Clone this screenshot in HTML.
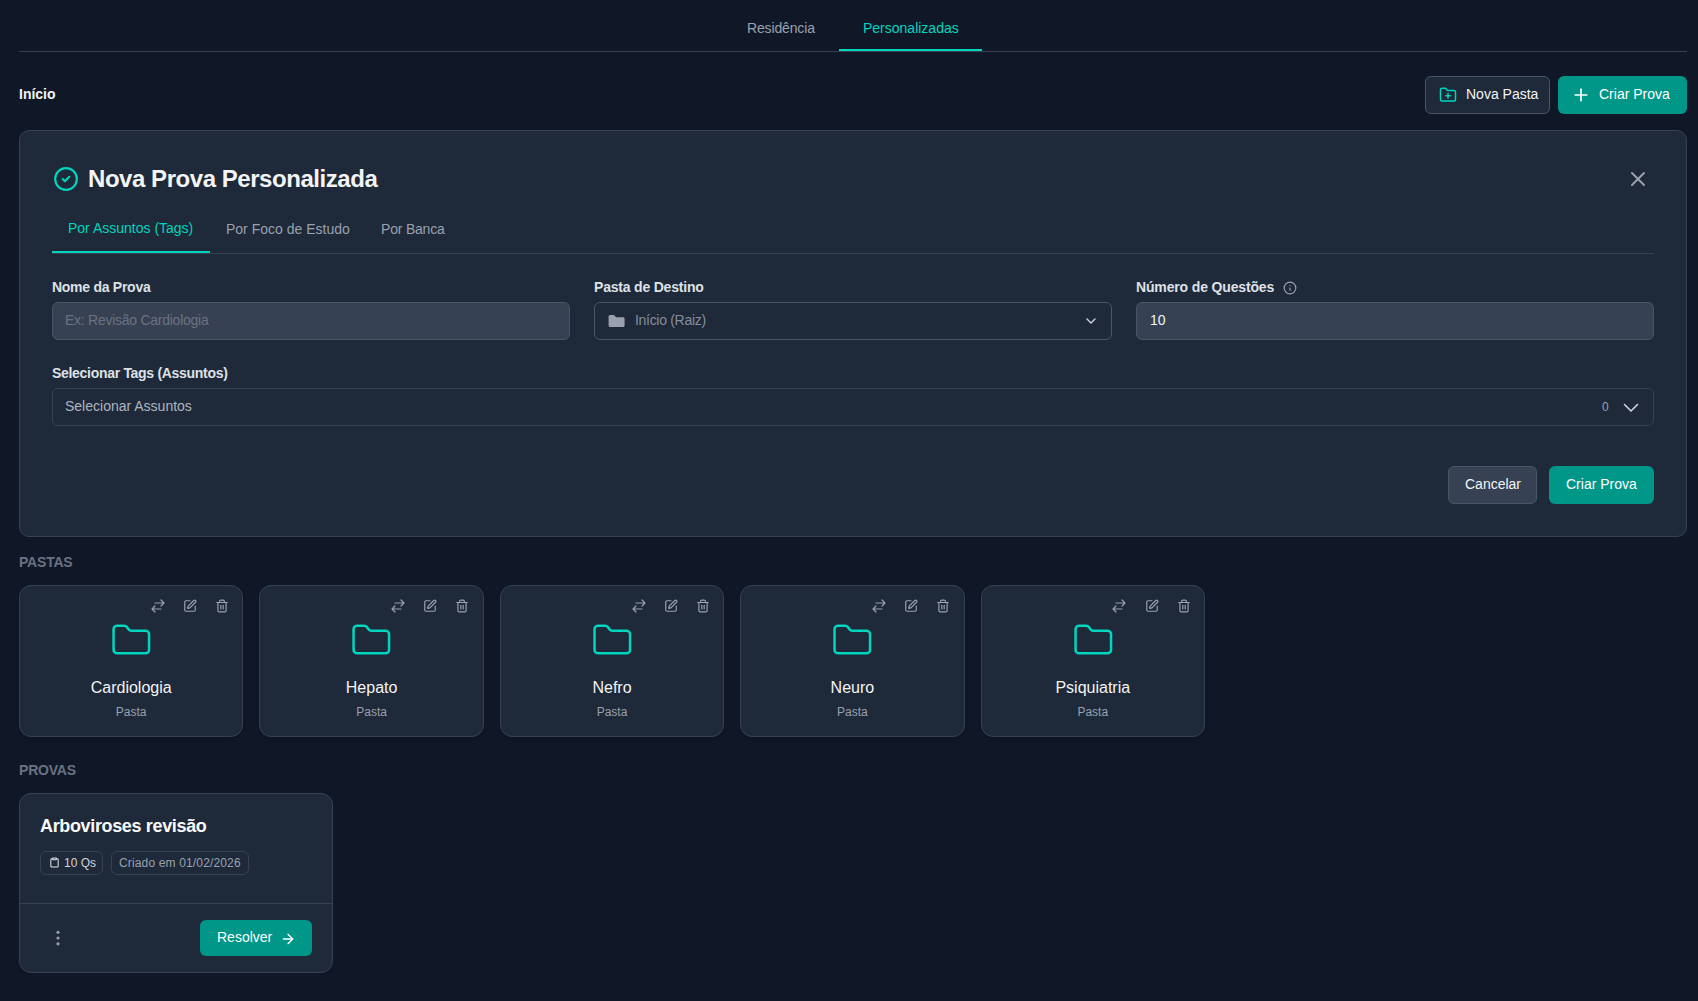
<!DOCTYPE html>
<html><head><meta charset="utf-8">
<style>
*{box-sizing:border-box;margin:0;padding:0}
html,body{width:1698px;height:1001px;overflow:hidden;background:#101828;font-family:"Liberation Sans",sans-serif;color:#e5e7eb}
.t{position:absolute;white-space:nowrap;line-height:1}
svg{position:absolute;fill:none;stroke:currentColor;stroke-linecap:round;stroke-linejoin:round}
.box{position:absolute}
.topline{position:absolute;left:19px;top:51px;width:1668px;height:1px;background:#364153}
.f14{font-size:14px}
.b{font-weight:bold}
.teal{color:#00d5be}
.gray{color:#99a1af}
.modal{position:absolute;left:19px;top:130px;width:1668px;height:407px;background:#1e2939;border:1px solid #364153;border-radius:10px}
.inp{position:absolute;top:302px;height:38px;border-radius:6px;border:1px solid #4a5565}
.card{box-shadow:0 1px 3px rgba(0,0,0,.1),0 1px 2px -1px rgba(0,0,0,.1);position:absolute;top:585px;width:224px;height:152px;background:#1e2939;border:1px solid #364153;border-radius:12px}
.card .ic{color:#99a1af}
</style></head>
<body>
<!-- top tabs -->
<div class="t f14 gray" style="left:747px;top:21px;letter-spacing:-0.15px">Residência</div>
<div class="t f14 teal" style="left:863px;top:21px">Personalizadas</div>
<div class="box" style="left:839px;top:49px;width:143px;height:2px;background:#00d5be"></div>
<div class="topline"></div>

<div class="t f14 b" style="left:19px;top:87px;color:#f3f4f6">Início</div>

<!-- header buttons -->
<div class="box" style="left:1425px;top:76px;width:125px;height:38px;background:#1e2939;border:1px solid #4a5565;border-radius:6px"></div>
<svg style="left:1439px;top:86px;color:#00d5be" width="18" height="18" viewBox="0 0 24 24" stroke-width="2"><path d="M12 10v6"/><path d="M9 13h6"/><path d="M20 20a2 2 0 0 0 2-2V8a2 2 0 0 0-2-2h-7.9a2 2 0 0 1-1.690-.9L9.6 3.9A2 2 0 0 0 7.93 3H4a2 2 0 0 0-2 2v13a2 2 0 0 0 2 2Z"/></svg>
<div class="t f14" style="left:1466px;top:87px;color:#f3f4f6">Nova Pasta</div>
<div class="box" style="left:1558px;top:76px;width:129px;height:38px;background:#009688;border-radius:6px"></div>
<svg style="left:1571px;top:85px;color:#fff" width="20" height="20" viewBox="0 0 24 24" stroke-width="2"><path d="M5 12h14"/><path d="M12 5v14"/></svg>
<div class="t f14" style="left:1599px;top:87px;color:#fff">Criar Prova</div>

<!-- modal -->
<div class="modal"></div>
<svg style="left:53px;top:166px;color:#00d5be" width="26" height="26" viewBox="0 0 24 24" stroke-width="2"><circle cx="12" cy="12" r="10"/><path d="m9 12 2 2 4-4"/></svg>
<div class="t b" style="left:88px;top:167px;font-size:24px;letter-spacing:-0.45px;color:#f3f4f6">Nova Prova Personalizada</div>
<svg style="left:1626px;top:167px;color:#99a1af" width="24" height="24" viewBox="0 0 24 24" stroke-width="2"><path d="M18 6 6 18"/><path d="m6 6 12 12"/></svg>

<div class="t f14 teal" style="left:68px;top:221px">Por Assuntos (Tags)</div>
<div class="t f14 gray" style="left:226px;top:222px">Por Foco de Estudo</div>
<div class="t f14 gray" style="left:381px;top:222px;letter-spacing:-0.2px">Por Banca</div>
<div class="box" style="left:52px;top:253px;width:1602px;height:1px;background:#364153"></div>
<div class="box" style="left:52px;top:251px;width:158px;height:2px;background:#00d5be"></div>

<div class="t f14 b" style="left:52px;top:280px;color:#dde1e6;letter-spacing:-0.27px">Nome da Prova</div>
<div class="t f14 b" style="left:594px;top:280px;color:#dde1e6;letter-spacing:-0.2px">Pasta de Destino</div>
<div class="t f14 b" style="left:1136px;top:280px;color:#dde1e6;letter-spacing:-0.15px">Número de Questões</div>
<svg style="left:1283px;top:281px;color:#99a1af" width="14" height="14" viewBox="0 0 24 24" stroke-width="2"><circle cx="12" cy="12" r="10"/><path d="M12 16v-4"/><path d="M12 8h.01"/></svg>

<div class="inp" style="left:52px;width:518px;background:#364153"></div>
<div class="t f14" style="left:65px;top:313px;color:#6a7282;letter-spacing:-0.26px">Ex: Revisão Cardiologia</div>

<div class="inp" style="left:594px;width:518px;background:#1e2939"></div>
<svg style="left:607.4px;top:312.9px;color:#99a1af;fill:#99a1af;stroke:none" width="19.2" height="16.9" viewBox="0 0 24 24" preserveAspectRatio="none"><path d="M20 20a2 2 0 0 0 2-2V8a2 2 0 0 0-2-2h-7.9a2 2 0 0 1-1.69-.9L9.6 3.9A2 2 0 0 0 7.93 3H4a2 2 0 0 0-2 2v13a2 2 0 0 0 2 2Z"/></svg>
<div class="t f14" style="left:635px;top:313px;color:#858e9c;letter-spacing:-0.3px">Início (Raiz)</div>
<svg style="left:1083px;top:313px;color:#d1d5dc" width="16" height="16" viewBox="0 0 24 24" stroke-width="2"><path d="m6 9 6 6 6-6"/></svg>

<div class="inp" style="left:1136px;width:518px;background:#364153"></div>
<div class="t f14" style="left:1150px;top:313px;color:#f3f4f6">10</div>

<div class="t f14 b" style="left:52px;top:366px;color:#dde1e6;letter-spacing:-0.3px">Selecionar Tags (Assuntos)</div>
<div class="box" style="left:52px;top:388px;width:1602px;height:38px;border:1px solid #364153;border-radius:6px;background:#1e2939"></div>
<div class="t f14" style="left:65px;top:399px;color:#aeb5c0">Selecionar Assuntos</div>
<div class="t" style="left:1602px;top:401px;font-size:12px;color:#99a1af">0</div>
<svg style="left:1620px;top:397px;color:#d1d5dc" width="22" height="20" viewBox="0 0 22 20" stroke-width="1.6"><path d="M4.5 7.5 11 14 17.5 7.5"/></svg>

<div class="box" style="left:1448px;top:466px;width:89px;height:38px;background:#364153;border:1px solid #4a5565;border-radius:6px"></div>
<div class="t f14" style="left:1465px;top:477px;color:#f3f4f6">Cancelar</div>
<div class="box" style="left:1549px;top:466px;width:105px;height:38px;background:#009688;border-radius:6px"></div>
<div class="t f14" style="left:1566px;top:477px;color:#fff">Criar Prova</div>

<!-- PASTAS -->
<div class="t f14 b" style="left:19px;top:555px;color:#6a7282;letter-spacing:-0.2px">PASTAS</div>
<div class="card" style="left:19px;width:224.4px"></div>
<svg style="left:149.7px;top:598.3px;color:#99a1af" width="16" height="16" viewBox="0 0 24 24" stroke-width="1.8"><path d="M7.5 21 3 16.5 7.5 12M3 16.5h13.5M16.5 3 21 7.5 16.5 12M21 7.5H7.5"/></svg>
<svg style="left:183.0px;top:599px;color:#99a1af" width="14" height="14" viewBox="0 0 24 24" stroke-width="2"><path d="M12 3H5a2 2 0 0 0-2 2v14a2 2 0 0 0 2 2h14a2 2 0 0 0 2-2v-7"/><path d="M18.375 2.625a1 1 0 0 1 3 3l-9.013 9.014a2 2 0 0 1-.853.505l-2.873.84a.5.5 0 0 1-.62-.62l.84-2.873a2 2 0 0 1 .506-.852z"/></svg>
<svg style="left:215.0px;top:599px;color:#99a1af" width="14" height="14" viewBox="0 0 24 24" stroke-width="2"><path d="M3 6h18"/><path d="M19 6v14c0 1-1 2-2 2H7c-1 0-2-1-2-2V6"/><path d="M8 6V4c0-1 1-2 2-2h4c1 0 2 1 2 2v2"/><line x1="10" x2="10" y1="11" y2="17"/><line x1="14" x2="14" y1="11" y2="17"/></svg>
<svg style="left:109.9px;top:621.4px;color:#00d5be" width="42.6" height="38.8" viewBox="0 0 24 24" preserveAspectRatio="none"><path d="M20 20a2 2 0 0 0 2-2V8a2 2 0 0 0-2-2h-7.9a2 2 0 0 1-1.69-.9L9.6 3.9A2 2 0 0 0 7.93 3H4a2 2 0 0 0-2 2v13a2 2 0 0 0 2 2Z" stroke-width="2.5" vector-effect="non-scaling-stroke"/></svg>
<div class="t" style="left:19px;width:224.4px;text-align:center;top:679.5px;font-size:16px;color:#f3f4f6">Cardiologia</div>
<div class="t" style="left:19px;width:224.4px;text-align:center;top:706px;font-size:12px;color:#99a1af">Pasta</div>
<div class="card" style="left:259.4px;width:224.4px"></div>
<svg style="left:390.1px;top:598.3px;color:#99a1af" width="16" height="16" viewBox="0 0 24 24" stroke-width="1.8"><path d="M7.5 21 3 16.5 7.5 12M3 16.5h13.5M16.5 3 21 7.5 16.5 12M21 7.5H7.5"/></svg>
<svg style="left:423.4px;top:599px;color:#99a1af" width="14" height="14" viewBox="0 0 24 24" stroke-width="2"><path d="M12 3H5a2 2 0 0 0-2 2v14a2 2 0 0 0 2 2h14a2 2 0 0 0 2-2v-7"/><path d="M18.375 2.625a1 1 0 0 1 3 3l-9.013 9.014a2 2 0 0 1-.853.505l-2.873.84a.5.5 0 0 1-.62-.62l.84-2.873a2 2 0 0 1 .506-.852z"/></svg>
<svg style="left:455.4px;top:599px;color:#99a1af" width="14" height="14" viewBox="0 0 24 24" stroke-width="2"><path d="M3 6h18"/><path d="M19 6v14c0 1-1 2-2 2H7c-1 0-2-1-2-2V6"/><path d="M8 6V4c0-1 1-2 2-2h4c1 0 2 1 2 2v2"/><line x1="10" x2="10" y1="11" y2="17"/><line x1="14" x2="14" y1="11" y2="17"/></svg>
<svg style="left:350.3px;top:621.4px;color:#00d5be" width="42.6" height="38.8" viewBox="0 0 24 24" preserveAspectRatio="none"><path d="M20 20a2 2 0 0 0 2-2V8a2 2 0 0 0-2-2h-7.9a2 2 0 0 1-1.69-.9L9.6 3.9A2 2 0 0 0 7.93 3H4a2 2 0 0 0-2 2v13a2 2 0 0 0 2 2Z" stroke-width="2.5" vector-effect="non-scaling-stroke"/></svg>
<div class="t" style="left:259.4px;width:224.4px;text-align:center;top:679.5px;font-size:16px;color:#f3f4f6">Hepato</div>
<div class="t" style="left:259.4px;width:224.4px;text-align:center;top:706px;font-size:12px;color:#99a1af">Pasta</div>
<div class="card" style="left:499.8px;width:224.4px"></div>
<svg style="left:630.5px;top:598.3px;color:#99a1af" width="16" height="16" viewBox="0 0 24 24" stroke-width="1.8"><path d="M7.5 21 3 16.5 7.5 12M3 16.5h13.5M16.5 3 21 7.5 16.5 12M21 7.5H7.5"/></svg>
<svg style="left:663.8px;top:599px;color:#99a1af" width="14" height="14" viewBox="0 0 24 24" stroke-width="2"><path d="M12 3H5a2 2 0 0 0-2 2v14a2 2 0 0 0 2 2h14a2 2 0 0 0 2-2v-7"/><path d="M18.375 2.625a1 1 0 0 1 3 3l-9.013 9.014a2 2 0 0 1-.853.505l-2.873.84a.5.5 0 0 1-.62-.62l.84-2.873a2 2 0 0 1 .506-.852z"/></svg>
<svg style="left:695.8px;top:599px;color:#99a1af" width="14" height="14" viewBox="0 0 24 24" stroke-width="2"><path d="M3 6h18"/><path d="M19 6v14c0 1-1 2-2 2H7c-1 0-2-1-2-2V6"/><path d="M8 6V4c0-1 1-2 2-2h4c1 0 2 1 2 2v2"/><line x1="10" x2="10" y1="11" y2="17"/><line x1="14" x2="14" y1="11" y2="17"/></svg>
<svg style="left:590.7px;top:621.4px;color:#00d5be" width="42.6" height="38.8" viewBox="0 0 24 24" preserveAspectRatio="none"><path d="M20 20a2 2 0 0 0 2-2V8a2 2 0 0 0-2-2h-7.9a2 2 0 0 1-1.69-.9L9.6 3.9A2 2 0 0 0 7.93 3H4a2 2 0 0 0-2 2v13a2 2 0 0 0 2 2Z" stroke-width="2.5" vector-effect="non-scaling-stroke"/></svg>
<div class="t" style="left:499.8px;width:224.4px;text-align:center;top:679.5px;font-size:16px;color:#f3f4f6">Nefro</div>
<div class="t" style="left:499.8px;width:224.4px;text-align:center;top:706px;font-size:12px;color:#99a1af">Pasta</div>
<div class="card" style="left:740.2px;width:224.4px"></div>
<svg style="left:870.9px;top:598.3px;color:#99a1af" width="16" height="16" viewBox="0 0 24 24" stroke-width="1.8"><path d="M7.5 21 3 16.5 7.5 12M3 16.5h13.5M16.5 3 21 7.5 16.5 12M21 7.5H7.5"/></svg>
<svg style="left:904.2px;top:599px;color:#99a1af" width="14" height="14" viewBox="0 0 24 24" stroke-width="2"><path d="M12 3H5a2 2 0 0 0-2 2v14a2 2 0 0 0 2 2h14a2 2 0 0 0 2-2v-7"/><path d="M18.375 2.625a1 1 0 0 1 3 3l-9.013 9.014a2 2 0 0 1-.853.505l-2.873.84a.5.5 0 0 1-.62-.62l.84-2.873a2 2 0 0 1 .506-.852z"/></svg>
<svg style="left:936.2px;top:599px;color:#99a1af" width="14" height="14" viewBox="0 0 24 24" stroke-width="2"><path d="M3 6h18"/><path d="M19 6v14c0 1-1 2-2 2H7c-1 0-2-1-2-2V6"/><path d="M8 6V4c0-1 1-2 2-2h4c1 0 2 1 2 2v2"/><line x1="10" x2="10" y1="11" y2="17"/><line x1="14" x2="14" y1="11" y2="17"/></svg>
<svg style="left:831.1px;top:621.4px;color:#00d5be" width="42.6" height="38.8" viewBox="0 0 24 24" preserveAspectRatio="none"><path d="M20 20a2 2 0 0 0 2-2V8a2 2 0 0 0-2-2h-7.9a2 2 0 0 1-1.69-.9L9.6 3.9A2 2 0 0 0 7.93 3H4a2 2 0 0 0-2 2v13a2 2 0 0 0 2 2Z" stroke-width="2.5" vector-effect="non-scaling-stroke"/></svg>
<div class="t" style="left:740.2px;width:224.4px;text-align:center;top:679.5px;font-size:16px;color:#f3f4f6">Neuro</div>
<div class="t" style="left:740.2px;width:224.4px;text-align:center;top:706px;font-size:12px;color:#99a1af">Pasta</div>
<div class="card" style="left:980.6px;width:224.4px"></div>
<svg style="left:1111.3px;top:598.3px;color:#99a1af" width="16" height="16" viewBox="0 0 24 24" stroke-width="1.8"><path d="M7.5 21 3 16.5 7.5 12M3 16.5h13.5M16.5 3 21 7.5 16.5 12M21 7.5H7.5"/></svg>
<svg style="left:1144.6px;top:599px;color:#99a1af" width="14" height="14" viewBox="0 0 24 24" stroke-width="2"><path d="M12 3H5a2 2 0 0 0-2 2v14a2 2 0 0 0 2 2h14a2 2 0 0 0 2-2v-7"/><path d="M18.375 2.625a1 1 0 0 1 3 3l-9.013 9.014a2 2 0 0 1-.853.505l-2.873.84a.5.5 0 0 1-.62-.62l.84-2.873a2 2 0 0 1 .506-.852z"/></svg>
<svg style="left:1176.6px;top:599px;color:#99a1af" width="14" height="14" viewBox="0 0 24 24" stroke-width="2"><path d="M3 6h18"/><path d="M19 6v14c0 1-1 2-2 2H7c-1 0-2-1-2-2V6"/><path d="M8 6V4c0-1 1-2 2-2h4c1 0 2 1 2 2v2"/><line x1="10" x2="10" y1="11" y2="17"/><line x1="14" x2="14" y1="11" y2="17"/></svg>
<svg style="left:1071.5px;top:621.4px;color:#00d5be" width="42.6" height="38.8" viewBox="0 0 24 24" preserveAspectRatio="none"><path d="M20 20a2 2 0 0 0 2-2V8a2 2 0 0 0-2-2h-7.9a2 2 0 0 1-1.69-.9L9.6 3.9A2 2 0 0 0 7.93 3H4a2 2 0 0 0-2 2v13a2 2 0 0 0 2 2Z" stroke-width="2.5" vector-effect="non-scaling-stroke"/></svg>
<div class="t" style="left:980.6px;width:224.4px;text-align:center;top:679.5px;font-size:16px;color:#f3f4f6">Psiquiatria</div>
<div class="t" style="left:980.6px;width:224.4px;text-align:center;top:706px;font-size:12px;color:#99a1af">Pasta</div>

<!-- PROVAS -->
<div class="t f14 b" style="left:19px;top:763px;color:#6a7282;letter-spacing:-0.2px">PROVAS</div>
<div class="box" style="left:19px;top:793px;width:314px;height:180px;background:#1e2939;border:1px solid #364153;border-radius:12px"></div>
<div class="box" style="left:20px;top:903px;width:312px;height:1px;background:#364153"></div>
<div class="t b" style="left:40px;top:817px;font-size:18px;letter-spacing:-0.35px;color:#f9fafb">Arboviroses revisão</div>
<div class="box" style="left:40px;top:851px;width:63px;height:24px;border:1px solid #364153;border-radius:6px;background:#1e2939"></div>
<svg style="left:48.6px;top:857.3px;color:#e5e7eb" width="11" height="11" viewBox="0 0 24 24" stroke-width="2.2"><rect width="8" height="4" x="8" y="2" rx="1" ry="1"/><path d="M16 4h2a2 2 0 0 1 2 2v14a2 2 0 0 1-2 2H6a2 2 0 0 1-2-2V6a2 2 0 0 1 2-2h2"/></svg>
<div class="t" style="left:64px;top:857px;font-size:12px;color:#d1d5dc">10 Qs</div>
<div class="box" style="left:111px;top:851px;width:138px;height:24px;border:1px solid #364153;border-radius:6px;background:#1e2939"></div>
<div class="t" style="left:119px;top:857px;font-size:12px;letter-spacing:0.15px;color:#99a1af">Criado em 01/02/2026</div>
<svg style="left:50px;top:928px;color:#99a1af;fill:#99a1af;stroke:none" width="16" height="20" viewBox="0 0 16 20"><circle cx="8" cy="4.3" r="1.6"/><circle cx="8" cy="10" r="1.6"/><circle cx="8" cy="15.8" r="1.6"/></svg>
<div class="box" style="left:200px;top:920px;width:112px;height:36px;background:#009688;border-radius:6px"></div>
<div class="t f14" style="left:217px;top:930px;color:#fff">Resolver</div>
<svg style="left:280px;top:931px;color:#fff" width="16" height="16" viewBox="0 0 24 24" stroke-width="2"><path d="M5 12h14"/><path d="m12 5 7 7-7 7"/></svg>
</body></html>
